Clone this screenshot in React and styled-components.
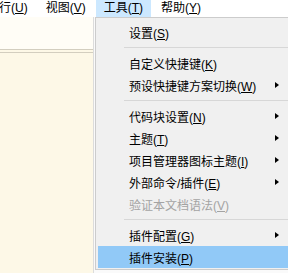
import React from 'react';
import styled, { createGlobalStyle } from 'styled-components';

const GlobalStyle = createGlobalStyle`
  html, body {
    margin: 0;
    padding: 0;
    background: #ffffff;
  }
  body {
    font-family: "Liberation Sans", "Noto Sans CJK SC", sans-serif;
    font-size: 12px;
    color: #000;
  }
`;

const Window = styled.div`
  position: relative;
  width: 288px;
  height: 273px;
  overflow: hidden;
  display: flex;
  flex-direction: column;
  background: #ffffff;
`;

const MenuBar = styled.div`
  display: flex;
  height: 17px;
  margin-left: -21px;
  background: #ffffff;
  flex-shrink: 0;
`;

const BarItem = styled.div`
  padding: 0 8px;
  margin-right: 2px;
  line-height: 17px;
  white-space: nowrap;
  background: ${({ $open }) => ($open ? '#cce8ff' : 'transparent')};
`;

const Workspace = styled.div`
  flex: 1;
  display: flex;
`;

const EditorColumn = styled.div`
  width: 93px;
  display: flex;
  flex-direction: column;
  border-right: 1px solid #dcdcdc;
`;

const Toolbar = styled.div`
  height: 32px;
  background: #fffdf6;
`;

const Rule = styled.div`
  height: 2px;
  border-top: 1px solid #d3cebf;
  border-bottom: 1px solid #d3cebf;
  background: #fdf8e7;
`;

const Editor = styled.div`
  flex: 1;
  background: #fdf8e7;
`;

const Filler = styled.div`
  flex: 1;
  background: #fafafa;
`;

const Dropdown = styled.div`
  position: absolute;
  left: 95px;
  top: 17px;
  width: 205px;
  height: 253px;
  box-sizing: border-box;
  border: 1px solid #cccccc;
  background: #f0f0f0;
  padding: 3px 2px 1px 2px;
  display: flex;
  flex-direction: column;
`;

const Item = styled.div`
  display: flex;
  align-items: center;
  height: 22px;
  padding-left: 31px;
  white-space: nowrap;
  color: ${({ $disabled }) => ($disabled ? '#a3a3a3' : '#000')};
  background: ${({ $active }) => ($active ? '#91c9f7' : 'transparent')};
`;

const Label = styled.span`
  flex: 1;
`;

const Arrow = styled.span`
  width: 0;
  height: 0;
  margin-right: 18px;
  border-top: 3.5px solid transparent;
  border-bottom: 3.5px solid transparent;
  border-left: 4px solid #000;
`;

const Separator = styled.div`
  height: 9px;
  display: flex;
  align-items: center;
  padding-left: 26px;

  &::after {
    content: '';
    flex: 1;
    border-top: 1px solid #d7d7d7;
  }
`;

const menuBar = [
  ['运行', 'U'],
  ['视图', 'V'],
  ['工具', 'T', true],
  ['帮助', 'Y'],
];

const menu = [
  { label: '设置', key: 'S' },
  { sep: true },
  { label: '自定义快捷键', key: 'K' },
  { label: '预设快捷键方案切换', key: 'W', sub: true },
  { sep: true },
  { label: '代码块设置', key: 'N', sub: true },
  { label: '主题', key: 'T', sub: true },
  { label: '项目管理器图标主题', key: 'I', sub: true },
  { label: '外部命令/插件', key: 'E', sub: true },
  { label: '验证本文档语法', key: 'V', disabled: true },
  { sep: true },
  { label: '插件配置', key: 'G', sub: true },
  { label: '插件安装', key: 'P', active: true },
];

export default function App() {
  return (
    <Window>
      <GlobalStyle />
      <MenuBar>
        {menuBar.map(([text, key, open]) => (
          <BarItem key={key} $open={open}>
            {text}(<u>{key}</u>)
          </BarItem>
        ))}
      </MenuBar>
      <Workspace>
        <EditorColumn>
          <Toolbar />
          <Rule />
          <Editor />
        </EditorColumn>
        <Filler />
      </Workspace>
      <Dropdown>
        {menu.map((m, i) =>
          m.sep ? (
            <Separator key={i} />
          ) : (
            <Item key={i} $disabled={m.disabled} $active={m.active}>
              <Label>
                {m.label}(<u>{m.key}</u>)
              </Label>
              {m.sub && <Arrow />}
            </Item>
          )
        )}
      </Dropdown>
    </Window>
  );
}
